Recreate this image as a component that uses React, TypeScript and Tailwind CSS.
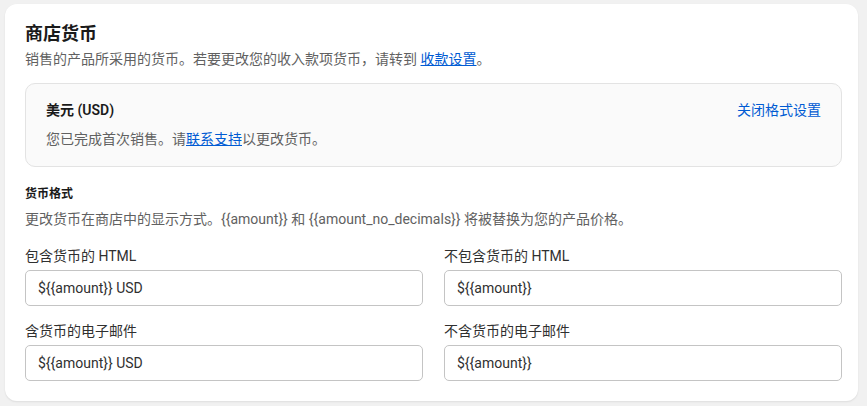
import React from "react";

const font = { fontFamily: 'Roboto, "Noto Sans CJK SC", sans-serif' };

function Field({ label, value }: { label: string; value: string }) {
  return (
    <div className="flex flex-col">
      <label className="text-[14px] leading-[20px] text-[#303030] mb-[4px]">{label}</label>
      <div className="h-[36px] rounded-[5px] border border-[#c4c4c4] bg-white px-[12px] flex items-center text-[14px] text-[#303030]">
        {value}
      </div>
    </div>
  );
}

export default function App() {
  return (
    <div className="min-h-[406px] w-[867px] bg-[#f1f1f1] pl-[5px] pt-[4px]" style={font}>
      <div className="w-[853px] rounded-[12px] bg-white pl-[20px] pr-[16px] pt-[20px] pb-[20px] shadow-[0_1px_0_0_#e3e3e3,0_1px_2px_0_rgba(0,0,0,0.08)]">
        <h2 className="text-[18px] leading-[20px] font-bold text-[#1a1a1a]">商店货币</h2>
        <p className="mt-[5px] text-[14px] leading-[20px] text-[#616161]">
          销售的产品所采用的货币。若要更改您的收入款项货币，请转到{" "}
          <a className="text-[#005bd3] underline">收款设置</a>。
        </p>
        <div className="mt-[14px] h-[84px] rounded-[10px] border border-[#e3e3e3] bg-[#fafafa] px-[20px] pt-[16px]">
          <div className="flex items-center justify-between">
            <span className="text-[14px] leading-[20px] font-semibold text-[#1a1a1a]">美元 (USD)</span>
            <a className="text-[14px] leading-[20px] text-[#005bd3]">关闭格式设置</a>
          </div>
          <p className="mt-[9px] text-[14px] leading-[20px] text-[#616161]">
            您已完成首次销售。请<a className="text-[#005bd3] underline">联系支持</a>以更改货币。
          </p>
        </div>
        <h3 className="mt-[17px] text-[12px] leading-[20px] font-bold text-[#1a1a1a]">货币格式</h3>
        <p className="mt-[5px] text-[14px] leading-[20px] text-[#616161]">
          更改货币在商店中的显示方式。{"{{amount}}"} 和 {"{{amount_no_decimals}}"} 将被替换为您的产品价格。
        </p>
        <div className="mt-[17px] grid grid-cols-2 gap-x-[21px] gap-y-[15px]">
          <Field label="包含货币的 HTML" value="${{amount}} USD" />
          <Field label="不包含货币的 HTML" value="${{amount}}" />
          <Field label="含货币的电子邮件" value="${{amount}} USD" />
          <Field label="不含货币的电子邮件" value="${{amount}}" />
        </div>
      </div>
    </div>
  );
}
